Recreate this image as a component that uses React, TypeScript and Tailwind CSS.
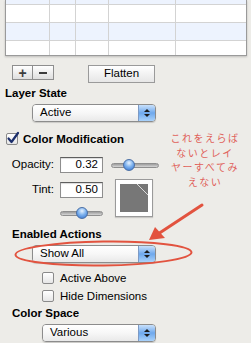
import React from 'react';

const font = { fontFamily: '"Liberation Sans", Arial, sans-serif' };

const Popup = ({ label, width }: { label: string; width: string }) => (
  <div
    className={`flex h-[18px] ${width} items-stretch overflow-hidden rounded-[4px] border border-[#8c8c8c] shadow-[0_1px_1px_rgba(0,0,0,0.15)]`}
  >
    <div className="flex flex-1 items-center bg-gradient-to-b from-white via-[#f7f7f7] to-[#e9e9e9] pl-[7px] text-[11.5px] leading-none text-black">
      {label}
    </div>
    <div className="flex w-[17px] flex-col items-center justify-center gap-[2px] border-l border-[#7d9ac4] bg-gradient-to-b from-[#c9e1fb] via-[#6ea8ec] to-[#a9d2fb]">
      <div className="h-0 w-0 border-x-[3px] border-b-[3px] border-x-transparent border-b-[#1b1b1b]" />
      <div className="h-0 w-0 border-x-[3px] border-t-[3px] border-x-transparent border-t-[#1b1b1b]" />
    </div>
  </div>
);

const Checkbox = ({ checked }: { checked?: boolean }) => (
  <div className="relative h-[12px] w-[12px] rounded-[2px] border border-[#8a8a8a] bg-gradient-to-b from-white to-[#e6e6e6]">
    {checked && (
      <svg className="absolute -left-[1px] -top-[3px]" width="14" height="14" viewBox="0 0 14 14">
        <path d="M2.5 7.5 L5.5 11 L12 2" fill="none" stroke="#1c2f6b" strokeWidth="2.2" strokeLinecap="round" strokeLinejoin="round" />
      </svg>
    )}
  </div>
);

const Slider = ({ width, knob }: { width: string; knob: string }) => (
  <div className={`relative flex h-[12px] ${width} items-center`}>
    <div className="h-[5px] w-full rounded-full border border-[#8f8f8f] bg-gradient-to-b from-[#9d9d9d] to-[#d6d6d6]" />
    <div
      className={`absolute top-0 ${knob} h-[12px] w-[12px] rounded-full border border-[#4a6fa5] bg-[radial-gradient(circle_at_50%_30%,#e8f3ff_0%,#7fb3ee_45%,#2f6fd0_100%)]`}
    />
  </div>
);

const Field = ({ value }: { value: string }) => (
  <div className="flex h-[16px] w-[43px] items-center justify-end border border-[#8e8e8e] border-t-[#5e5e5e] bg-white pr-[4px] text-[11.5px] leading-none text-black shadow-[inset_0_1px_1px_rgba(0,0,0,0.15)]">
    {value}
  </div>
);

const rows = [
  { h: 'h-[5px]', blue: true },
  { h: 'h-[18px]', blue: false },
  { h: 'h-[18px]', blue: true },
  { h: 'h-[14px]', blue: false },
];

const note = ['これをえらば', 'ないとレイ', 'ヤーすべてみ', 'えない'];

export default function App() {
  return (
    <div className="relative h-[343px] w-[251px] overflow-hidden bg-[#edece8] text-black" style={font}>
      {/* table */}
      <div className="ml-[5px] w-[242px] border-x border-b border-[#9a9a9a] bg-white shadow-[0_1px_2px_rgba(0,0,0,0.2)]">
        {rows.map((r, i) => (
          <div
            key={i}
            className={`grid ${r.h} grid-cols-[44px_26px_33px_67px_1fr] ${i < 3 ? 'border-b border-[#d3d3d3]' : ''} ${r.blue ? 'bg-[#edf3fe]' : 'bg-white'}`}
          >
            <div className="border-r border-[#d3d3d3]" />
            <div className="border-r border-[#d3d3d3]" />
            <div className="border-r border-[#d3d3d3]" />
            <div className="border-r border-[#d3d3d3]" />
            <div />
          </div>
        ))}
      </div>

      {/* buttons */}
      <div className="mt-[9px] flex items-start">
        <div className="ml-[12px] flex h-[15px] w-[42px] border border-[#8e8e8e] bg-gradient-to-b from-white to-[#dedede]">
          <div className="flex w-[20px] items-center justify-center border-r border-[#8e8e8e] text-[14px] font-bold leading-none text-[#3c3c3c]">
            +
          </div>
          <div className="flex flex-1 items-center justify-center">
            <div className="h-[2px] w-[8px] bg-[#3c3c3c]" />
          </div>
        </div>
        <div className="ml-[34px] flex h-[18px] w-[67px] items-center justify-center border border-[#9a9a9a] bg-gradient-to-b from-white to-[#e6e6e6] text-[11.5px] leading-none">
          Flatten
        </div>
      </div>

      {/* layer state */}
      <div className="mt-[3px] pl-[5px] text-[11.5px] font-bold leading-[14px]">Layer State</div>
      <div className="mt-[4px] pl-[32px]">
        <Popup label="Active" width="w-[124px]" />
      </div>

      <div className="mt-[10px] flex items-center pl-[6px]">
        <Checkbox checked />
        <span className="ml-[5px] text-[11.5px] font-bold leading-[14px]">Color Modification</span>
      </div>

      <div className="mt-[11px] flex items-center">
        <span className="w-[54px] text-right text-[11.5px] leading-none">Opacity:</span>
        <div className="ml-[6px]">
          <Field value="0.32" />
        </div>
        <div className="ml-[8px]">
          <Slider width="w-[48px]" knob="left-[12px]" />
        </div>
      </div>

      <div className="mt-[6px] flex items-start">
        <div className="flex flex-col">
          <div className="mt-[3px] flex items-center">
            <span className="w-[54px] text-right text-[11.5px] leading-none">Tint:</span>
            <div className="ml-[6px]">
              <Field value="0.50" />
            </div>
          </div>
          <div className="ml-[60px] mt-[9px]">
            <Slider width="w-[43px]" knob="left-[16px]" />
          </div>
        </div>
        <div className="ml-[12px] h-[38px] w-[38px] border border-[#9a9a9a] bg-white p-[4px] shadow-[0_1px_1px_rgba(0,0,0,0.15)]">
          <div className="relative h-full w-full bg-[#777777]">
            <svg className="absolute inset-0" width="28" height="28" viewBox="0 0 28 28">
              <line x1="17" y1="0" x2="28" y2="11" stroke="#dcdcdc" strokeWidth="1" />
            </svg>
          </div>
        </div>
      </div>

      {/* enabled actions */}
      <div className="mt-[8px] pl-[12px] text-[11.5px] font-bold leading-[14px]">Enabled Actions</div>
      <div className="mt-[4px] pl-[32px]">
        <Popup label="Show All" width="w-[124px]" />
      </div>

      <div className="mt-[8px] flex items-center pl-[42px]">
        <Checkbox />
        <span className="ml-[6px] text-[11.5px] leading-[14px]">Active Above</span>
      </div>
      <div className="mt-[4px] flex items-center pl-[42px]">
        <Checkbox />
        <span className="ml-[6px] text-[11.5px] leading-[14px]">Hide Dimensions</span>
      </div>

      <div className="mt-[3px] pl-[12px] text-[11.5px] font-bold leading-[14px]">Color Space</div>
      <div className="mt-[4px] pl-[42px]">
        <Popup label="Various" width="w-[114px]" />
      </div>

      {/* annotation */}
      <div
        className="absolute left-[160px] top-[131px] w-[90px] text-center text-[10px] leading-[14.5px] tracking-[1.5px] text-[#e0615a]"
        style={{ fontFamily: '"Noto Sans CJK JP", sans-serif' }}
      >
        {note.map((line) => (
          <div key={line}>{line}</div>
        ))}
      </div>
      <svg className="pointer-events-none absolute left-0 top-0" width="251" height="343" viewBox="0 0 251 343">
        <ellipse cx="103.5" cy="253.5" rx="88" ry="12" fill="none" stroke="#e2533f" strokeWidth="2" transform="rotate(-0.8 103.5 253.5)" />
        <line x1="202" y1="205" x2="158" y2="234" stroke="#e2533f" strokeWidth="3" strokeLinecap="round" />
        <polygon points="149,240 155,227 165,238" fill="#e2533f" />
      </svg>
    </div>
  );
}
